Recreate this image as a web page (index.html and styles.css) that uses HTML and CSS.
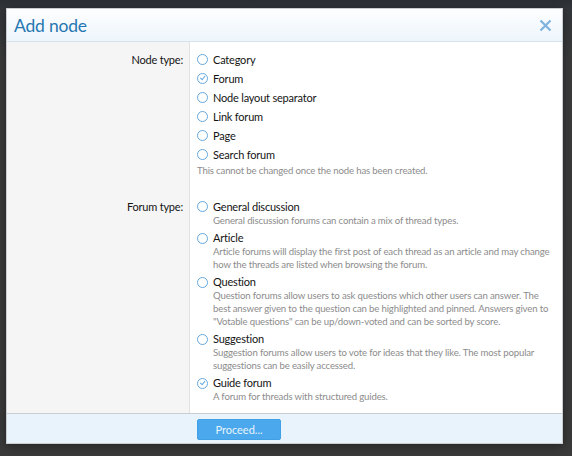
FILE: index.html
```html
<!DOCTYPE html>
<html>
<head>
<meta charset="utf-8">
<link rel="stylesheet" href="styles.css">
</head>
<body>
<div class="dialog">
  <div class="dialog-header">
    <h2 class="dialog-title">Add node</h2>
    <span class="dialog-close" aria-label="Close">
      <svg width="13" height="13" viewBox="0 0 13 13"><path d="M1.5 1.5 L11.5 11.5 M11.5 1.5 L1.5 11.5" stroke="#7db3de" stroke-width="2.2" fill="none"/></svg>
    </span>
  </div>
  <div class="dialog-body">
    <div class="form-row first">
      <div class="row-label">Node type:</div>
      <div class="row-input">
        <ul class="choices">
          <li class="choice"><span class="radio"></span><span class="choice-label">Category</span></li>
          <li class="choice"><span class="radio checked"></span><span class="choice-label">Forum</span></li>
          <li class="choice"><span class="radio"></span><span class="choice-label">Node layout separator</span></li>
          <li class="choice"><span class="radio"></span><span class="choice-label">Link forum</span></li>
          <li class="choice"><span class="radio"></span><span class="choice-label">Page</span></li>
          <li class="choice"><span class="radio"></span><span class="choice-label">Search forum</span></li>
        </ul>
        <div class="hint">This cannot be changed once the node has been created.</div>
      </div>
    </div>
    <div class="form-row last">
      <div class="row-label">Forum type:</div>
      <div class="row-input">
        <ul class="choices described">
          <li class="choice"><span class="radio"></span><div class="choice-text"><span class="choice-label">General discussion</span><span class="desc">General discussion forums can contain a mix of thread types.</span></div></li>
          <li class="choice"><span class="radio"></span><div class="choice-text"><span class="choice-label">Article</span><span class="desc">Article forums will display the first post of each thread as an article and may change how the threads are listed when browsing the forum.</span></div></li>
          <li class="choice"><span class="radio"></span><div class="choice-text"><span class="choice-label">Question</span><span class="desc">Question forums allow users to ask questions which other users can answer. The best answer given to the question can be highlighted and pinned. Answers given to "Votable questions" can be up/down-voted and can be sorted by score.</span></div></li>
          <li class="choice"><span class="radio"></span><div class="choice-text"><span class="choice-label">Suggestion</span><span class="desc">Suggestion forums allow users to vote for ideas that they like. The most popular suggestions can be easily accessed.</span></div></li>
          <li class="choice"><span class="radio checked"></span><div class="choice-text"><span class="choice-label">Guide forum</span><span class="desc">A forum for threads with structured guides.</span></div></li>
        </ul>
      </div>
    </div>
  </div>
  <div class="dialog-footer">
    <div class="footer-spacer"></div>
    <div class="footer-actions"><button class="button">Proceed...</button></div>
  </div>
</div>
</body>
</html>
```

FILE: styles.css
```css
html, body {
  margin: 0;
  padding: 0;
}
body {
  width: 572px;
  height: 456px;
  overflow: hidden;
  background: linear-gradient(#2c3034 0, #33363a 8px, #3b3b3b 60px, #3a3a3a 100%);
  font-family: Lato, "Open Sans", sans-serif;
  padding: 8px 9px 0 6px;
  box-sizing: border-box;
}
.dialog {
  width: 557px;
  height: 436px;
  background: #fff;
  border: 1px solid #c9ccd0;
  box-sizing: border-box;
  display: flex;
  flex-direction: column;
  box-shadow: 0 2px 10px rgba(0,0,0,0.4);
  overflow: hidden;
}
.dialog-header {
  height: 33px;
  flex: none;
  box-sizing: border-box;
  border-bottom: 1px solid #d6e2ec;
  background: linear-gradient(#fefeff, #edf5fc);
  display: flex;
  align-items: center;
  justify-content: space-between;
  padding: 0 10px 0 7px;
}
.dialog-title {
  margin: 0;
  font-weight: normal;
  font-size: 17.5px;
  letter-spacing: -0.2px;
  color: #2577b1;
  line-height: 20px;
  padding-top: 1px;
}
.dialog-close {
  display: flex;
  width: 13px;
  height: 13px;
}
.dialog-body {
  flex: 1;
  min-height: 0;
  overflow: hidden;
  display: flex;
  flex-direction: column;
  background: linear-gradient(to right, #f5f5f5 0, #f5f5f5 182px, #e2e2e2 182px, #e2e2e2 183px, #fff 183px);
}
.form-row {
  display: flex;
  padding: 10px 0;
}
.form-row.first { padding-top: 9px; }
.form-row.last { padding-top: 11px; }
.row-label {
  width: 176px;
  flex: none;
  text-align: right;
  font-size: 11px;
  letter-spacing: -0.2px;
  line-height: 17px;
  color: #141414;
  padding-right: 6px;
}
.form-row.last .row-label { line-height: 16px; }
.row-input {
  padding-left: 8px;
  flex: 1;
}
.choices {
  list-style: none;
  margin: 0;
  padding: 0;
  display: flex;
  flex-direction: column;
  gap: 2px;
}
.choices.described { gap: 3px; }
.choice {
  display: flex;
  align-items: flex-start;
}
.radio {
  flex: none;
  width: 11px;
  height: 11px;
  border: 1.3px solid #64a8de;
  border-radius: 50%;
  box-sizing: border-box;
  margin-top: 3px;
  margin-right: 5px;
  position: relative;
  background: #fff;
}
.described .radio { margin-top: 2.5px; }
.radio.checked::after {
  content: "";
  position: absolute;
  left: 2.6px;
  top: 1.2px;
  width: 2.4px;
  height: 4.4px;
  border-right: 1.1px solid #64a8de;
  border-bottom: 1.1px solid #64a8de;
  transform: rotate(40deg);
}
.choice-text {
  display: flex;
  flex-direction: column;
}
.choice-label {
  font-size: 11px;
  letter-spacing: -0.2px;
  line-height: 17px;
  color: #141414;
}
.described .choice-label { line-height: 16px; }
.desc, .hint {
  font-size: 9.6px;
  letter-spacing: -0.15px;
  line-height: 12.6px;
  color: #8c8c8c;
}
.desc { padding-right: 10px; }
.hint { margin-top: 2px; }
.dialog-footer {
  flex: none;
  height: 30px;
  box-sizing: border-box;
  border-top: 1px solid #c8cdd2;
  background: #e9f3fc;
  display: flex;
  align-items: center;
}
.footer-spacer { width: 183px; flex: none; }
.footer-actions { padding-left: 7px; }
.button {
  width: 84px;
  height: 21px;
  border: 1px solid #40a0e6;
  border-radius: 2px;
  background: #4ba8ec;
  color: #e8f4fd;
  font-family: Lato, "Open Sans", sans-serif;
  font-size: 11px;
  padding: 0;
  margin-top: 1px;
}
```
